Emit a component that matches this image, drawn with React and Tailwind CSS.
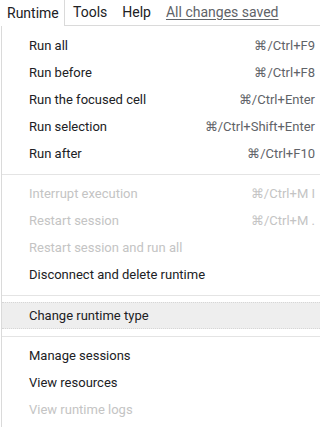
import React from "react";

const Item = ({ label, shortcut, disabled, active }) => (
  <div
    className={`flex h-[27px] items-center justify-between pl-[27px] pr-[5px] ${
      active ? "bg-[#eeeeee] border-y border-dotted border-[#d6d6d6]" : ""
    }`}
  >
    <span className={disabled ? "text-[#c4c4c4]" : "text-[#202124]"}>{label}</span>
    {shortcut && (
      <span className={disabled ? "text-[#c4c4c4]" : "text-[#5f6368]"}>{shortcut}</span>
    )}
  </div>
);

const Sep = () => <div className="mt-[6.5px] mb-[6px] h-px bg-[#e4e4e4]" />;

export default function App() {
  return (
    <div
      className="w-[320px] h-[427px] overflow-hidden bg-white"
      style={{ fontFamily: "Roboto, 'Liberation Sans', sans-serif" }}
    >
      <div className="flex h-[26px] items-stretch text-[14px]">
        <div className="flex w-[65px] items-center border-r border-[#dadada] pl-[7px] text-[#202124]">
          Runtime
        </div>
        <div className="flex flex-1 items-center border-b border-[#dadada] pl-[8px] gap-[15px] text-[#202124]">
          <span>Tools</span>
          <span>Help</span>
          <span className="text-[#5f6368] underline underline-offset-2">All changes saved</span>
        </div>
      </div>
      <div className="ml-px border-l border-[#dadada] pt-[6px] h-full text-[13px]">
        <Item label="Run all" shortcut="⌘/Ctrl+F9" />
        <Item label="Run before" shortcut="⌘/Ctrl+F8" />
        <Item label="Run the focused cell" shortcut="⌘/Ctrl+Enter" />
        <Item label="Run selection" shortcut="⌘/Ctrl+Shift+Enter" />
        <Item label="Run after" shortcut="⌘/Ctrl+F10" />
        <Sep />
        <Item label="Interrupt execution" shortcut="⌘/Ctrl+M I" disabled />
        <Item label="Restart session" shortcut="⌘/Ctrl+M ." disabled />
        <Item label="Restart session and run all" disabled />
        <Item label="Disconnect and delete runtime" />
        <Sep />
        <Item label="Change runtime type" active />
        <Sep />
        <Item label="Manage sessions" />
        <Item label="View resources" />
        <Item label="View runtime logs" disabled />
      </div>
    </div>
  );
}
